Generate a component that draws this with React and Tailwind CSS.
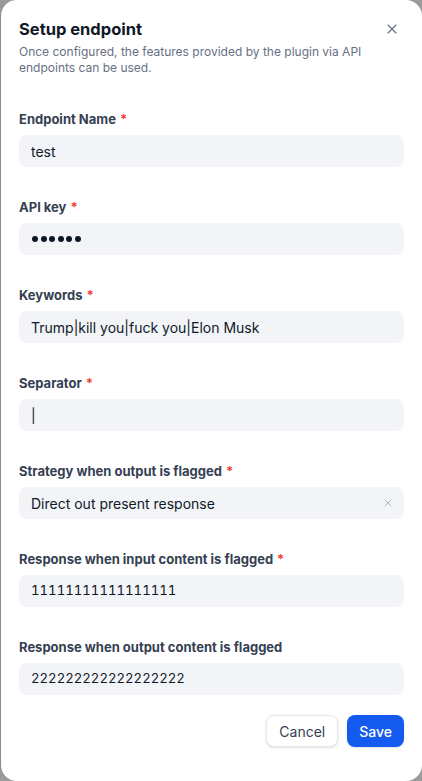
import { X } from 'lucide-react';

const fields = [
  { label: 'Endpoint Name', required: true, value: 'test' },
  { label: 'API key', required: true, value: 'password' },
  { label: 'Keywords', required: true, value: 'Trump|kill you|fuck you|Elon Musk' },
  { label: 'Separator', required: true, value: '|' },
  { label: 'Strategy when output is flagged', required: true, value: 'Direct out present response', select: true },
  { label: 'Response when input content is flagged', required: true, value: '11111111111111111', digits: true },
  { label: 'Response when output content is flagged', required: false, value: '222222222222222222', digits: true },
];

function Field({ field }) {
  return (
    <div className="flex flex-col">
      <div className="h-5 flex items-center text-[13px] font-bold text-[#354052] leading-5">
        {field.label}
        {field.required && <span className="ml-1 text-[#f04438]">*</span>}
      </div>
      <div className="mt-1.5 h-8 rounded-lg bg-[#f2f4f7] flex items-center px-3 text-[14px] text-[#101828]">
        {field.value === 'password' ? (
          <span className="flex items-center gap-[2.5px] pl-[1px]">
            {[0, 1, 2, 3, 4, 5].map((i) => (
              <span key={i} className="w-[6px] h-[6px] rounded-full bg-[#101828]" />
            ))}
          </span>
        ) : field.digits ? (
          <span className="flex-1 truncate text-[13.2px] tabular-nums">{field.value}</span>
        ) : (
          <span className="flex-1 truncate">{field.value}</span>
        )}
        {field.select && <X className="w-3 h-3 text-[#98a2b3] mr-[-2px]" strokeWidth={1.5} />}
      </div>
    </div>
  );
}

export default function App() {
  return (
    <div className="w-[422px] h-[781px] bg-[#9a9a9a]" style={{ fontFamily: 'Inter, "Noto Sans", sans-serif' }}>
      <div className="w-full h-full bg-white rounded-2xl border-l border-[#8a8a8a] flex flex-col px-[18px] pt-[15px]">
        <div className="flex items-start justify-between">
          <h1 className="text-[16.5px] leading-7 font-bold text-[#101828]">Setup endpoint</h1>
          <X className="w-4 h-4 text-[#676f83] mt-[6px] mr-[4px]" strokeWidth={1.75} />
        </div>
        <p className="text-[12px] leading-4 text-[#676f83] mt-[1px] pr-4">
          Once configured, the features provided by the plugin via API endpoints can be used.
        </p>
        <div className="flex flex-col gap-[30px] mt-[33px]">
          {fields.map((f) => (
            <Field key={f.label} field={f} />
          ))}
        </div>
        <div className="flex justify-end gap-[9px] mt-5">
          <button className="h-8 px-3 rounded-lg border border-[#e4e7ec] bg-white text-[14px] text-[#354052] shadow-sm">
            Cancel
          </button>
          <button className="h-8 px-3 rounded-lg bg-[#155aef] text-[14px] font-medium text-white shadow-sm">
            Save
          </button>
        </div>
      </div>
    </div>
  );
}
